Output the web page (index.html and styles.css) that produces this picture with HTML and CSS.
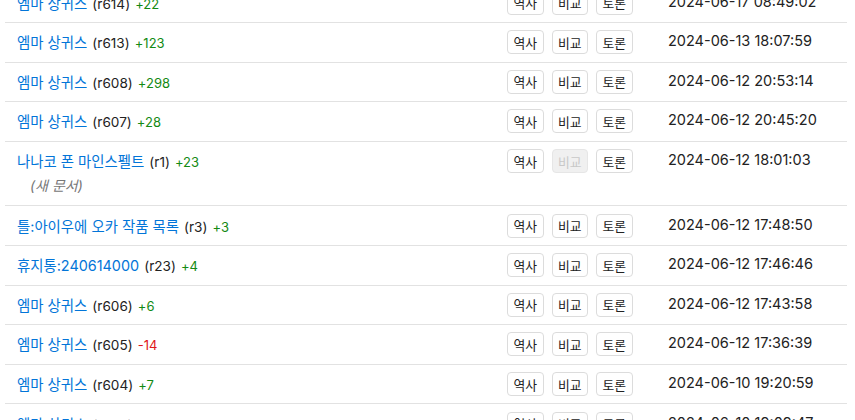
FILE: index.html
```html
<!DOCTYPE html>
<html lang="ko">
<head>
  <meta charset="UTF-8">
  <meta name="viewport" content="width=device-width, initial-scale=1.0">
  <title>최근 변경</title>
  <link rel="stylesheet" href="styles.css">
</head>
<body>
  <div class="changes">
    <div class="row">
      <div class="title"><a href="#">엠마 상귀스</a> <span class="rev">(r614)</span> <span class="diff plus">+22</span></div>
      <div class="actions"><a class="btn" href="#">역사</a><a class="btn" href="#">비교</a><a class="btn" href="#">토론</a></div>
      <div class="date">2024-06-17 08:49:02</div>
    </div>
    <div class="row">
      <div class="title"><a href="#">엠마 상귀스</a> <span class="rev">(r613)</span> <span class="diff plus">+123</span></div>
      <div class="actions"><a class="btn" href="#">역사</a><a class="btn" href="#">비교</a><a class="btn" href="#">토론</a></div>
      <div class="date">2024-06-13 18:07:59</div>
    </div>
    <div class="row">
      <div class="title"><a href="#">엠마 상귀스</a> <span class="rev">(r608)</span> <span class="diff plus">+298</span></div>
      <div class="actions"><a class="btn" href="#">역사</a><a class="btn" href="#">비교</a><a class="btn" href="#">토론</a></div>
      <div class="date">2024-06-12 20:53:14</div>
    </div>
    <div class="row">
      <div class="title"><a href="#">엠마 상귀스</a> <span class="rev">(r607)</span> <span class="diff plus">+28</span></div>
      <div class="actions"><a class="btn" href="#">역사</a><a class="btn" href="#">비교</a><a class="btn" href="#">토론</a></div>
      <div class="date">2024-06-12 20:45:20</div>
    </div>
    <div class="row">
      <div class="title">
        <a href="#">나나코 폰 마인스펠트</a> <span class="rev">(r1)</span> <span class="diff plus">+23</span>
        <div class="note">(새 문서)</div>
      </div>
      <div class="actions"><a class="btn" href="#">역사</a><span class="btn disabled">비교</span><a class="btn" href="#">토론</a></div>
      <div class="date">2024-06-12 18:01:03</div>
    </div>
    <div class="row">
      <div class="title"><a href="#">틀:아이우에 오카 작품 목록</a> <span class="rev">(r3)</span> <span class="diff plus">+3</span></div>
      <div class="actions"><a class="btn" href="#">역사</a><a class="btn" href="#">비교</a><a class="btn" href="#">토론</a></div>
      <div class="date">2024-06-12 17:48:50</div>
    </div>
    <div class="row">
      <div class="title"><a href="#">휴지통:240614000</a> <span class="rev">(r23)</span> <span class="diff plus">+4</span></div>
      <div class="actions"><a class="btn" href="#">역사</a><a class="btn" href="#">비교</a><a class="btn" href="#">토론</a></div>
      <div class="date">2024-06-12 17:46:46</div>
    </div>
    <div class="row">
      <div class="title"><a href="#">엠마 상귀스</a> <span class="rev">(r606)</span> <span class="diff plus">+6</span></div>
      <div class="actions"><a class="btn" href="#">역사</a><a class="btn" href="#">비교</a><a class="btn" href="#">토론</a></div>
      <div class="date">2024-06-12 17:43:58</div>
    </div>
    <div class="row">
      <div class="title"><a href="#">엠마 상귀스</a> <span class="rev">(r605)</span> <span class="diff minus">-14</span></div>
      <div class="actions"><a class="btn" href="#">역사</a><a class="btn" href="#">비교</a><a class="btn" href="#">토론</a></div>
      <div class="date">2024-06-12 17:36:39</div>
    </div>
    <div class="row">
      <div class="title"><a href="#">엠마 상귀스</a> <span class="rev">(r604)</span> <span class="diff plus">+7</span></div>
      <div class="actions"><a class="btn" href="#">역사</a><a class="btn" href="#">비교</a><a class="btn" href="#">토론</a></div>
      <div class="date">2024-06-10 19:20:59</div>
    </div>
    <div class="row">
      <div class="title"><a href="#">엠마 상귀스</a> <span class="rev">(r603)</span></div>
      <div class="actions"><a class="btn" href="#">역사</a><a class="btn" href="#">비교</a><a class="btn" href="#">토론</a></div>
      <div class="date">2024-06-10 19:09:47</div>
    </div>
  </div>
</body>
</html>
```

FILE: styles.css
```css
:root {
  --link-color: #0275d8;
  --text-color: #222;
  --border-color: #e2e2e2;
  --btn-border: #dcdcdc;
}

* {
  box-sizing: border-box;
  margin: 0;
  padding: 0;
}

body {
  font-family: Inter, 'Noto Sans CJK KR', sans-serif;
  font-size: 14.4px;
  color: var(--text-color);
  background: #fff;
}

.changes {
  margin: -16.6px 8px 0 5px;
}

.row {
  display: grid;
  grid-template-columns: 1fr 161px 167px;
  align-items: start;
  padding: 7.3px 12px;
  border-bottom: 1px solid var(--border-color);
}

.title {
  padding-top: 1px;
  line-height: 23px;
}

.title a {
  color: var(--link-color);
  text-decoration: none;
}

.rev {
  font-size: 13.6px;
  line-height: 1;
  margin-left: 1px;
}

.diff {
  font-size: 13px;
  line-height: 1;
  margin-left: 1px;
}

.plus {
  color: #138a13;
}

.minus {
  color: #e0161b;
}

.note {
  font-style: italic;
  color: #777;
  font-size: 14px;
  line-height: 25px;
  padding-left: 13px;
}

.actions {
  display: flex;
  gap: 8px;
}

.btn {
  display: flex;
  align-items: center;
  justify-content: center;
  height: 24px;
  padding: 0 5.5px;
  font-size: 12.8px;
  color: var(--text-color);
  text-decoration: none;
  border: 1px solid var(--btn-border);
  border-radius: 4px;
  background: #fff;
}

.btn.disabled {
  color: #c8c8c8;
  background: #f0f0f0;
  border-color: #e6e6e6;
}

.date {
  font-size: 14.5px;
  line-height: 22px;
}
```
